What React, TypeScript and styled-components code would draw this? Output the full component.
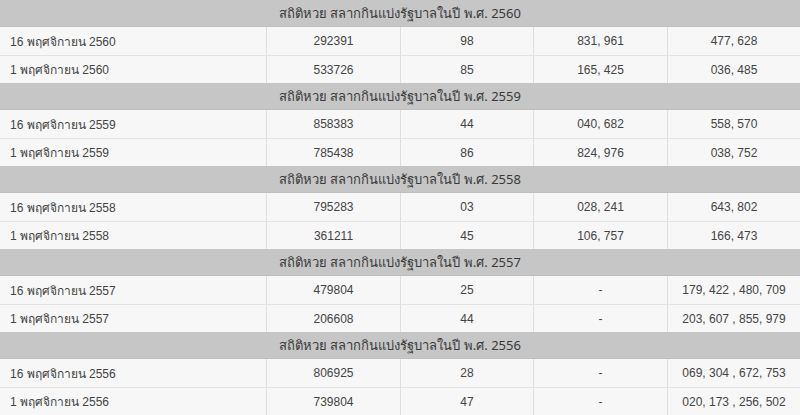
import { Fragment } from "react";
import styled, { createGlobalStyle } from "styled-components";

const GlobalStyle = createGlobalStyle`
  html, body {
    margin: 0;
    padding: 0;
    background: #ffffff;
  }
`;

type Draw = {
  date: string;
  first: string;
  last2: string;
  front3: string;
  back3: string;
};

type Year = {
  year: string;
  draws: Draw[];
};

const years: Year[] = [
  {
    year: "2560",
    draws: [
      { date: "16 พฤศจิกายน 2560", first: "292391", last2: "98", front3: "831, 961", back3: "477, 628" },
      { date: "1 พฤศจิกายน 2560", first: "533726", last2: "85", front3: "165, 425", back3: "036, 485" },
    ],
  },
  {
    year: "2559",
    draws: [
      { date: "16 พฤศจิกายน 2559", first: "858383", last2: "44", front3: "040, 682", back3: "558, 570" },
      { date: "1 พฤศจิกายน 2559", first: "785438", last2: "86", front3: "824, 976", back3: "038, 752" },
    ],
  },
  {
    year: "2558",
    draws: [
      { date: "16 พฤศจิกายน 2558", first: "795283", last2: "03", front3: "028, 241", back3: "643, 802" },
      { date: "1 พฤศจิกายน 2558", first: "361211", last2: "45", front3: "106, 757", back3: "166, 473" },
    ],
  },
  {
    year: "2557",
    draws: [
      { date: "16 พฤศจิกายน 2557", first: "479804", last2: "25", front3: "-", back3: "179, 422 , 480, 709" },
      { date: "1 พฤศจิกายน 2557", first: "206608", last2: "44", front3: "-", back3: "203, 607 , 855, 979" },
    ],
  },
  {
    year: "2556",
    draws: [
      { date: "16 พฤศจิกายน 2556", first: "806925", last2: "28", front3: "-", back3: "069, 304 , 672, 753" },
      { date: "1 พฤศจิกายน 2556", first: "739804", last2: "47", front3: "-", back3: "020, 173 , 256, 502" },
    ],
  },
];

const Board = styled.div`
  width: 800px;
  display: flex;
  flex-direction: column;
  font-family: "Liberation Sans", Arial, sans-serif;
  color: #444444;
`;

const YearTitle = styled.div`
  height: 27px;
  display: flex;
  align-items: center;
  justify-content: center;
  background: #c6c6c6;
  font-family: "Noto Sans", "Liberation Sans", sans-serif;
  font-size: 13px;
  color: #3a3a3a;
  box-sizing: border-box;
  border-bottom: 1px solid #bfbfbf;
`;

const DrawRow = styled.div`
  display: grid;
  grid-template-columns: 266px 134px 133px 134px 133px;
  height: 28px;
  background: #f7f7f7;
  box-sizing: border-box;
  border-top: 1px solid #e2e2e2;

  ${YearTitle} + & {
    border-top: none;
  }
`;

const Cell = styled.div<{ $left?: boolean }>`
  display: flex;
  align-items: center;
  justify-content: ${(p) => (p.$left ? "flex-start" : "center")};
  padding: 0 ${(p) => (p.$left ? "10px" : "4px")};
  font-size: 12px;
  white-space: nowrap;
  border-left: 1px solid #dedede;

  &:first-child {
    border-left: none;
  }
`;

export default function App() {
  return (
    <>
      <GlobalStyle />
      <Board>
        {years.map((y) => (
          <Fragment key={y.year}>
            <YearTitle>สถิติหวย สลากกินแบ่งรัฐบาลในปี พ.ศ. {y.year}</YearTitle>
            {y.draws.map((d) => (
              <DrawRow key={d.date}>
                <Cell $left>{d.date}</Cell>
                <Cell>{d.first}</Cell>
                <Cell>{d.last2}</Cell>
                <Cell>{d.front3}</Cell>
                <Cell>{d.back3}</Cell>
              </DrawRow>
            ))}
          </Fragment>
        ))}
      </Board>
    </>
  );
}
